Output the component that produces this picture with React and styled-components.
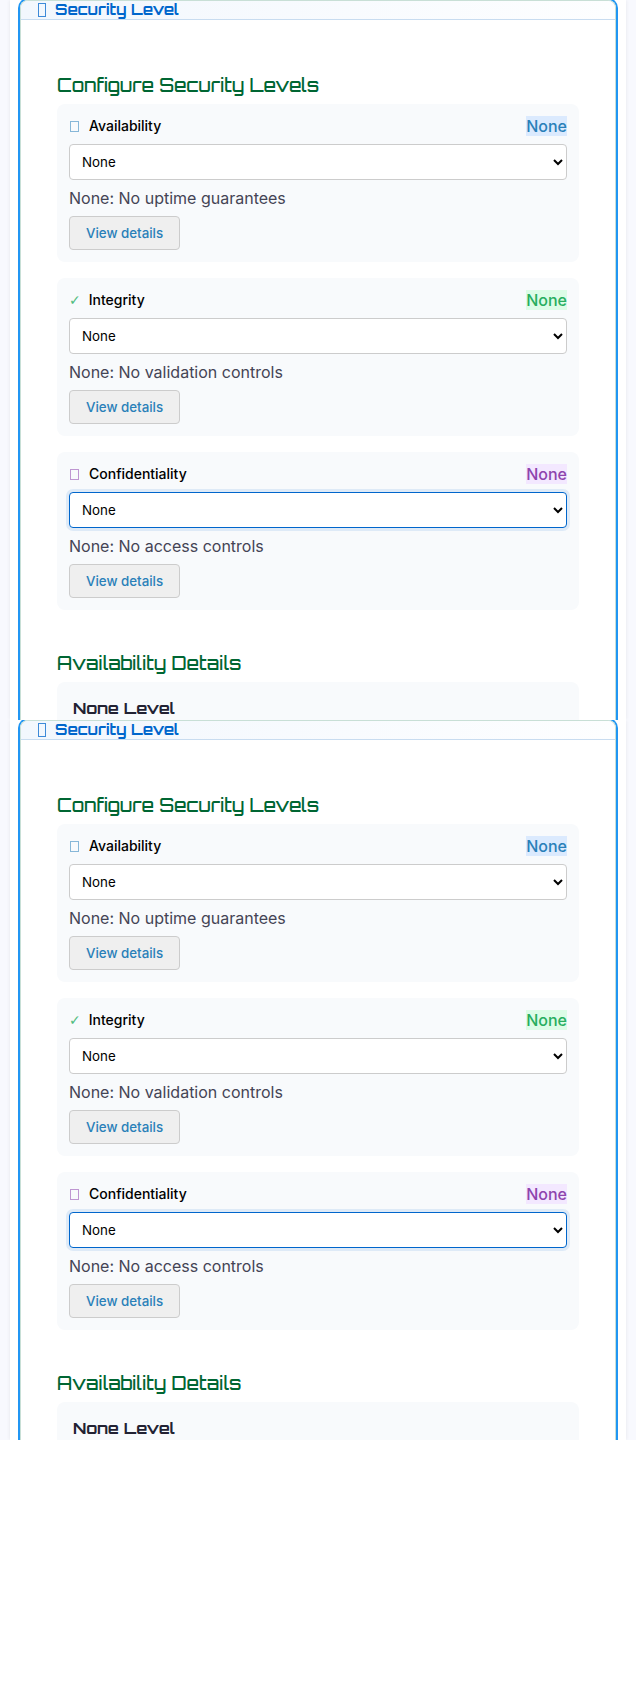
import React, { useId, useState } from 'react';
import styled, { createGlobalStyle } from 'styled-components';

const GlobalStyle = createGlobalStyle`
  *, *::before, *::after { box-sizing: border-box; }
  body {
    margin: 0;
    background: #ffffff;
    color: #000000;
    font-family: Inter, "Liberation Sans", sans-serif;
  }
`;

const display = 'Orbitron, "DejaVu Sans", sans-serif';

const Backdrop = styled.section`
  padding: 0 10px;
  overflow: hidden;
  background: #f8f9fe;
`;

const Frame = styled.div`
  padding: 0 10px;
  background: #ffffff;
  box-shadow: 0 0 4px rgba(0, 0, 0, 0.08);
`;

const Widget = styled.article`
  border: 1px solid #c8dfd6;
  border-bottom: 0;
  border-radius: 8px 8px 0 0;
  box-shadow: 0 0 0 2px #2196f3;
`;

const WidgetHeader = styled.header`
  display: flex;
  align-items: center;
  gap: 9px;
  height: 19px;
  padding: 0 17px;
  border-bottom: 1px solid #c8dcf0;
  border-radius: 7px 7px 0 0;
  background: linear-gradient(90deg, #f2f7fd, #fdfeff);
  color: #0066cc;
`;

const WidgetTitle = styled.h2`
  margin: 0;
  font: 700 15px/18px ${display};
`;

const HeaderGlyph = styled.span`
  width: 8px;
  height: 14px;
  border: 1px solid #3d8ad8;
`;

const Content = styled.div`
  display: flex;
  flex-direction: column;
  gap: 42px;
  padding: 54px 36px 0;
`;

const SectionTitle = styled.h3`
  margin: 0 0 8px;
  color: #006633;
  font: 500 18px/22px ${display};
`;

const CardList = styled.div`
  display: flex;
  flex-direction: column;
  gap: 16px;
`;

const Card = styled.div`
  padding: 12px;
  border-radius: 8px;
  background: #f8fafc;
`;

const CardHeader = styled.div`
  display: flex;
  align-items: center;
  justify-content: space-between;
  margin-bottom: 8px;
  line-height: 20px;
`;

const Label = styled.label`
  display: flex;
  align-items: center;
  gap: 8px;
  font-size: 14px;
  font-weight: 500;
`;

const BoxGlyph = styled.span`
  width: 9px;
  height: 11px;
  margin: 0 2px 0 1px;
  border: 1px solid ${(p) => p.$color};
  opacity: 0.55;
`;

const CheckGlyph = styled.span`
  color: ${(p) => p.$color};
  font-family: "DejaVu Sans", sans-serif;
  font-weight: 400;
  opacity: 0.8;
`;

const Badge = styled.span`
  background: ${(p) => p.$background};
  color: ${(p) => p.$color};
  font-size: 16px;
  font-weight: 500;
`;

const Select = styled.select`
  display: block;
  width: 100%;
  height: 36px;
  padding: 0 8px;
  border: 1px solid ${(p) => (p.$active ? '#0066cc' : '#cccccc')};
  border-radius: 4px;
  outline: none;
  background: #ffffff;
  box-shadow: ${(p) => (p.$active ? '0 0 0 3px rgba(0, 102, 204, 0.1)' : 'none')};
  color: #000000;
  font-family: inherit;
`;

const Description = styled.p`
  margin: 8px 0;
  color: #444455;
  font-size: 16px;
  line-height: 20px;
`;

const DetailsButton = styled.button`
  display: block;
  height: 34px;
  padding: 0 16px;
  border: 1px solid #cccccc;
  border-radius: 4px;
  background: #efefef;
  color: #2980b9;
  font-family: inherit;
  font-weight: 500;
`;

const DetailCard = styled.div`
  padding: 16px 16px 2px;
  border-radius: 8px 8px 0 0;
  background: #f8fafc;
`;

const DetailTitle = styled.h4`
  margin: 0;
  color: #222233;
  font: 700 16px/20px ${display};
`;

const controls = [
  { name: 'Availability', text: 'No uptime guarantees', color: '#2980b9', background: '#dbeafe' },
  { name: 'Integrity', text: 'No validation controls', color: '#27ae60', background: '#dcfce7', check: true },
  { name: 'Confidentiality', text: 'No access controls', color: '#8e44ad', background: '#f3e8ff', active: true },
];

function LevelCard({ control }) {
  const id = useId();
  const [level, setLevel] = useState('None');
  return (
    <Card>
      <CardHeader>
        <Label htmlFor={id}>
          {control.check ? (
            <CheckGlyph $color={control.color} aria-hidden="true">✓</CheckGlyph>
          ) : (
            <BoxGlyph $color={control.color} aria-hidden="true" />
          )}
          {control.name}
        </Label>
        <Badge $color={control.color} $background={control.background}>{level}</Badge>
      </CardHeader>
      <Select id={id} $active={control.active} value={level} onChange={(e) => setLevel(e.target.value)}>
        <option>None</option>
      </Select>
      <Description>{level}: {control.text}</Description>
      <DetailsButton type="button">View details</DetailsButton>
    </Card>
  );
}

function SecurityWidget() {
  return (
    <Backdrop>
      <Frame>
        <Widget>
          <WidgetHeader>
            <HeaderGlyph aria-hidden="true" />
            <WidgetTitle>Security Level</WidgetTitle>
          </WidgetHeader>
          <Content>
            <div>
              <SectionTitle>Configure Security Levels</SectionTitle>
              <CardList>
                {controls.map((control) => (
                  <LevelCard key={control.name} control={control} />
                ))}
              </CardList>
            </div>
            <div>
              <SectionTitle>Availability Details</SectionTitle>
              <DetailCard>
                <DetailTitle>None Level</DetailTitle>
              </DetailCard>
            </div>
          </Content>
        </Widget>
      </Frame>
    </Backdrop>
  );
}

export default function App() {
  return (
    <main>
      <GlobalStyle />
      <SecurityWidget />
      <SecurityWidget />
    </main>
  );
}
